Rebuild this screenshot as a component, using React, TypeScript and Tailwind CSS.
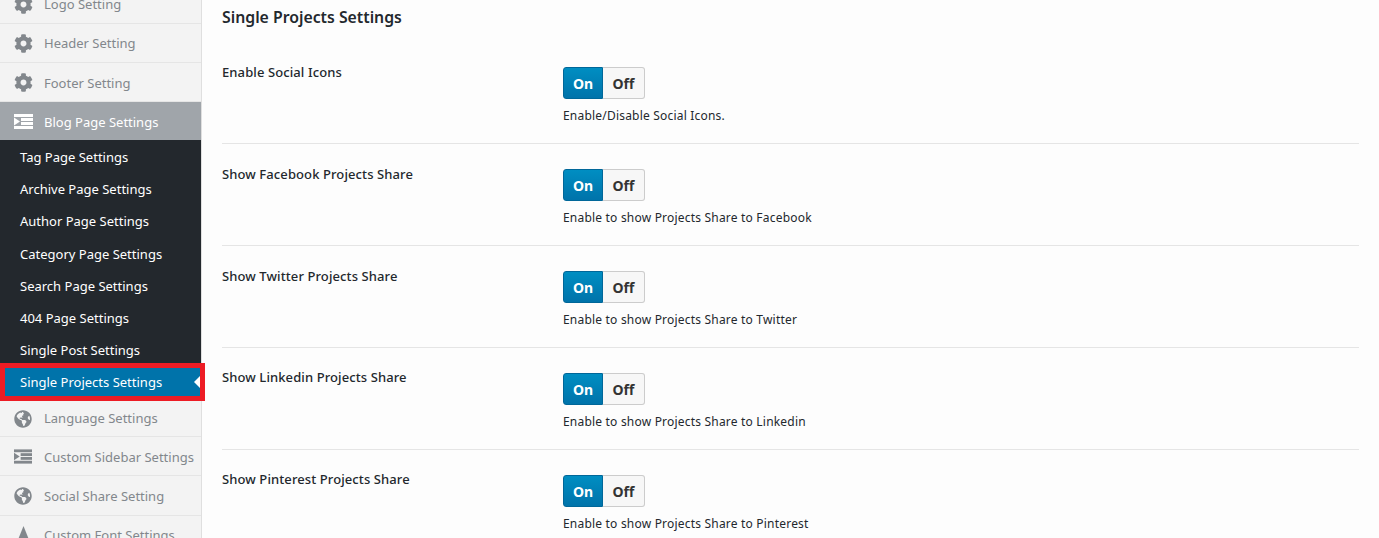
import React from 'react';
import { FaCog, FaGlobeAmericas } from 'react-icons/fa';

const IndentIcon = ({ className }: { className?: string }) => (
  <svg viewBox="0 0 19 15" className={className} fill="currentColor">
    <rect x="0" y="0" width="19" height="3" />
    <rect x="7" y="4" width="12" height="3" />
    <rect x="7" y="8" width="12" height="3" />
    <rect x="0" y="12" width="19" height="3" />
    <path d="M0 3.5 L6 7.5 L0 11.5 Z" />
  </svg>
);

const FontIcon = ({ className }: { className?: string }) => (
  <svg viewBox="0 0 20 20" className={className} fill="currentColor">
    <path d="M10 0 L18 20 L2 20 Z" />
  </svg>
);

const SUB_ITEMS = [
  'Tag Page Settings',
  'Archive Page Settings',
  'Author Page Settings',
  'Category Page Settings',
  'Search Page Settings',
  '404 Page Settings',
  'Single Post Settings',
];

const ROWS = [
  { label: 'Enable Social Icons', desc: 'Enable/Disable Social Icons.', labelTop: '' },
  { label: 'Show Facebook Projects Share', desc: 'Enable to show Projects Share to Facebook', labelTop: '' },
  { label: 'Show Twitter Projects Share', desc: 'Enable to show Projects Share to Twitter', labelTop: '' },
  { label: 'Show Linkedin Projects Share', desc: 'Enable to show Projects Share to Linkedin', labelTop: '-mt-[1px]' },
  { label: 'Show Pinterest Projects Share', desc: 'Enable to show Projects Share to Pinterest', labelTop: '-mt-[1px]' },
];

const NavItem = ({ icon, label, height, labelPad }: { icon: React.ReactNode; label: string; height: string; labelPad: string }) => (
  <div className={`flex items-center ${height} border-b border-[#e5e5e5] text-[#82878c]`}>
    <span className="w-[44px] pl-[14px] shrink-0 flex items-center">{icon}</span>
    <span className={`text-[13px] whitespace-nowrap ${labelPad}`}>{label}</span>
  </div>
);

const Toggle = () => (
  <div className="flex w-[82px] h-[32px] text-[14px] font-bold">
    <div className="w-[40px] pt-[1px] flex items-center justify-center rounded-l-[3px] text-white bg-gradient-to-b from-[#008ec2] to-[#0073aa] border border-[#006799]">On</div>
    <div className="flex-1 pt-[1px] flex items-center justify-center rounded-r-[3px] text-[#333] bg-[#f7f7f7] border border-l-0 border-[#ccc]">Off</div>
  </div>
);

export default function App() {
  return (
    <div className="h-[538px] w-[1379px] overflow-hidden flex bg-white font-['Noto_Sans','Open_Sans',sans-serif]">
      <aside className="w-[202px] shrink-0 h-[538px] bg-[#f3f3f3] border-r border-[#dfdfdf] relative">
        <div className="-mt-[15px]">
          <NavItem icon={<FaCog className="w-[19px] h-[19px]" />} label="Logo Setting" height="h-[39px]" labelPad="pt-[2px]" />
          <NavItem icon={<FaCog className="w-[19px] h-[19px]" />} label="Header Setting" height="h-[39px]" labelPad="pt-[2px]" />
          <NavItem icon={<FaCog className="w-[19px] h-[19px]" />} label="Footer Setting" height="h-[39px]" labelPad="pt-[3px]" />
          <div className="flex items-center h-[38px] w-[201px] bg-[#a0a5aa] text-white">
            <span className="w-[44px] pl-[14px] shrink-0 flex items-center"><IndentIcon className="w-[19px] h-[15px]" /></span>
            <span className="text-[13px] pt-[3px]">Blog Page Settings</span>
          </div>
          <div className="w-[201px] bg-[#23282d] pt-[1px]">
            {SUB_ITEMS.map((item) => (
              <div key={item} className="h-[32.25px] pt-[1px] flex items-center pl-[20px] text-[13px] text-white whitespace-nowrap">{item}</div>
            ))}
          </div>
          <div className="relative z-10 -mt-[3.75px] w-[205px] h-[38px] pt-[1px] border-[5px] border-[#ed1c24] bg-[#0073aa] flex items-center pl-[15px] text-[13px] text-white">
            Single Projects Settings
            <span className="absolute right-0 top-1/2 -translate-y-1/2 w-0 h-0 border-y-[6px] border-y-transparent border-r-[6px] border-r-white" />
          </div>
          <NavItem icon={<FaGlobeAmericas className="w-[18px] h-[18px]" />} label="Language Settings" height="h-[36px]" labelPad="" />
          <NavItem icon={<IndentIcon className="w-[18px] h-[15px]" />} label="Custom Sidebar Settings" height="h-[39px]" labelPad="pt-[3px]" />
          <NavItem icon={<FaGlobeAmericas className="w-[18px] h-[18px]" />} label="Social Share Setting" height="h-[40px]" labelPad="pt-[2px]" />
          <NavItem icon={<FontIcon className="w-[19px] h-[19px]" />} label="Custom Font Settings" height="h-[39px]" labelPad="pt-[1px]" />
        </div>
      </aside>
      <main className="flex-1 bg-[#fdfdfd] pl-[20px] pr-[20px] text-[#23282d]">
        <h2 className="text-[15.8px] font-semibold leading-[20px] mt-[7px] mb-[15px]">Single Projects Settings</h2>
        {ROWS.map((row) => (
          <section key={row.label} className="flex h-[102px] pt-[25px] border-b border-[#e5e5e5]">
            <div className={`w-[341px] shrink-0 text-[13px] tracking-[0.1px] leading-[10px] font-medium ${row.labelTop}`}>{row.label}</div>
            <div>
              <Toggle />
              <p className="text-[12px] tracking-[0.2px] mt-[9px] leading-[16px]">{row.desc}</p>
            </div>
          </section>
        ))}
      </main>
    </div>
  );
}
